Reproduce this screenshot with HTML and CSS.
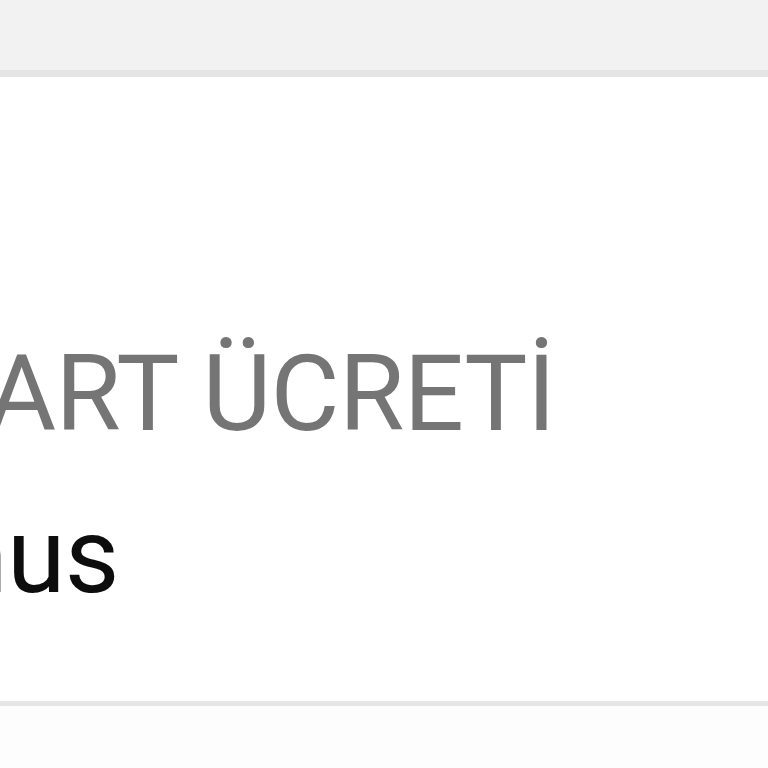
FILE: index.html
```html
<!DOCTYPE html>
<html lang="tr">
<head>
    <meta charset="UTF-8">
    <meta name="viewport" content="width=device-width, initial-scale=1.0">
    <title>Kart Ücreti</title>
    <link rel="stylesheet" href="styles.css">
</head>
<body>
    <div class="toolbar"></div>

    <div class="detail">
        <div class="detail-label">ART ÜCRETİ</div>
        <div class="detail-value">nus</div>
    </div>

    <div class="footer"></div>
</body>
</html>
```

FILE: styles.css
```css
* {
    margin: 0;
    padding: 0;
    box-sizing: border-box;
}

html, body {
    height: 100%;
}

body {
    font-family: Roboto, "Noto Sans", sans-serif;
    background: #fdfdfd;
    overflow: hidden;
}

.toolbar {
    height: 77px;
    background: #f2f2f2;
    border-bottom: 7px solid #e5e5e5;
}

.detail {
    background: #fff;
    padding: 257px 0 85px;
    border-bottom: 5px solid #e6e6e6;
}

.detail-label,
.detail-value {
    font-size: 106px;
    line-height: 120px;
    letter-spacing: -0.6px;
    white-space: nowrap;
}

.detail-label {
    color: #757575;
    margin-left: -13px;
}

.detail-value {
    color: #0d0d0d;
    margin-top: 42px;
    margin-left: -51px;
}
```
